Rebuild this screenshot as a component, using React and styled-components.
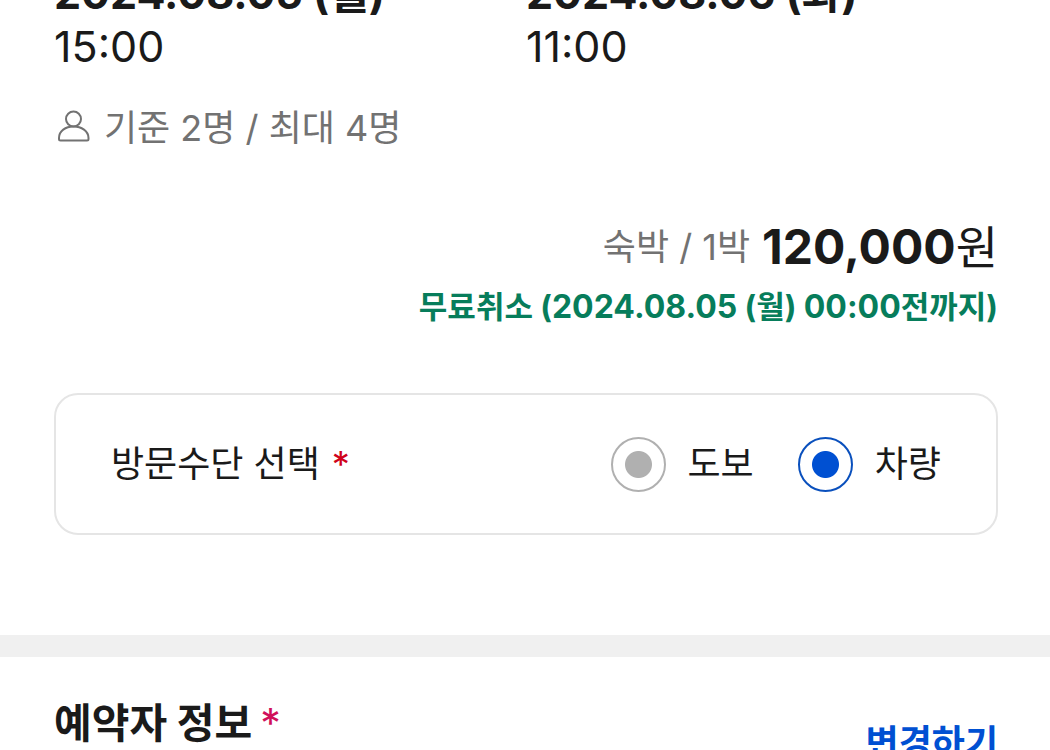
import React from "react";
import styled, { createGlobalStyle } from "styled-components";

const GlobalStyle = createGlobalStyle`
  *, *::before, *::after { box-sizing: border-box; }
  html, body { margin: 0; background: #fff; }
  body {
    font-family: Inter, "Noto Sans CJK KR", sans-serif;
    color: #1a1a1a;
    overflow: hidden;
  }
`;

const Page = styled.main`
  height: 100vh;
  overflow: hidden;
`;

const Section = styled.section`
  padding: 0 52px 0 54px;
`;

const Schedule = styled.div`
  display: grid;
  grid-template-columns: 1fr 1fr;
  margin-top: -33px;
`;

const Moment = styled.p`
  margin: 0;
  font-size: 43px;
  line-height: 53px;
  white-space: nowrap;
`;

const Day = styled.strong`
  display: block;
  font-weight: 700;
`;

const Guests = styled.p`
  display: flex;
  align-items: center;
  gap: 12px;
  margin: 31px 0 0;
  font-size: 36px;
  line-height: 48px;
  color: #727272;
`;

const GuestIcon = styled.svg`
  width: 38px;
  height: 38px;
  flex: none;
`;

const Price = styled.p`
  display: flex;
  justify-content: flex-end;
  align-items: center;
  margin: 63px 0 0;
  font-size: 36px;
  line-height: 64px;
  color: #727272;
`;

const Amount = styled.span`
  margin-left: 12px;
  font-size: 46px;
  color: #1a1a1a;

  strong {
    font-size: 48px;
    font-weight: 700;
  }
`;

const CancelNote = styled.p`
  margin: 4px 0 0;
  font-size: 31px;
  font-weight: 700;
  line-height: 48px;
  text-align: right;
  color: #077d5b;

  time {
    font-size: 32px;
  }
`;

const VisitCard = styled.fieldset`
  display: flex;
  align-items: center;
  justify-content: space-between;
  min-width: 0;
  margin: 62px 0 0;
  padding: 41px 55px;
  border: 2px solid #e5e5e5;
  border-radius: 24px;
`;

const FieldName = styled.span`
  font-size: 36px;
  line-height: 56px;
`;

const Required = styled.span`
  margin-left: ${(p) => p.$gap}px;
  font-weight: 400;
  color: ${(p) => p.$color};
`;

const Options = styled.div`
  display: flex;
  gap: 44px;
`;

const Option = styled.label`
  display: flex;
  align-items: center;
  gap: 22px;
  font-size: 36px;
  line-height: 56px;
`;

const Radio = styled.input`
  appearance: none;
  width: 55px;
  height: 55px;
  margin: 0;
  border: 2px solid #b0b0b0;
  border-radius: 50%;
  background: radial-gradient(circle, #b0b0b0 13px, transparent 14px);

  &:checked {
    border-color: #0a50bd;
    background: radial-gradient(circle, #0050d2 13px, transparent 14px);
  }
`;

const Divider = styled.hr`
  height: 22px;
  margin: 100px 0 0;
  border: 0;
  background: #f0f0f0;
`;

const GuestInfo = styled(Section)`
  display: flex;
  justify-content: space-between;
  align-items: flex-start;
`;

const Title = styled.h2`
  margin: 38px 0 0;
  font-size: 41px;
  font-weight: 700;
  line-height: 56px;
`;

const ChangeButton = styled.button`
  margin: 58px 0 0;
  padding: 0;
  border: 0;
  background: none;
  font: inherit;
  font-size: 36px;
  font-weight: 700;
  line-height: 56px;
  color: #0050d2;
`;

export default function App() {
  return (
    <>
      <GlobalStyle />
      <Page>
        <Section>
          <Schedule>
            <Moment>
              <Day>2024.08.05 (월)</Day>
              15:00
            </Moment>
            <Moment>
              <Day>2024.08.06 (화)</Day>
              11:00
            </Moment>
          </Schedule>
          <Guests>
            <GuestIcon viewBox="0 0 38 38" fill="none" stroke="#727272" strokeWidth="2" aria-hidden="true">
              <circle cx="19.5" cy="10" r="7.5" />
              <path d="M5 29C5 22 11.5 17.5 19.5 17.5S34.5 22 34.5 29V30Q34.5 31.5 33 31.5H6.5Q5 31.5 5 30Z" />
            </GuestIcon>
            기준 2명 / 최대 4명
          </Guests>
          <Price>
            숙박 / 1박
            <Amount>
              <strong>120,000</strong>원
            </Amount>
          </Price>
          <CancelNote>
            무료취소 (<time>2024.08.05</time> (월) <time>00:00</time>전까지)
          </CancelNote>
          <VisitCard aria-labelledby="visit-label">
            <FieldName id="visit-label">
              방문수단 선택
              <Required $gap={12} $color="#d0021b">*</Required>
            </FieldName>
            <Options>
              <Option>
                <Radio type="radio" name="visit" value="walk" />
                도보
              </Option>
              <Option>
                <Radio type="radio" name="visit" value="car" defaultChecked />
                차량
              </Option>
            </Options>
          </VisitCard>
        </Section>
        <Divider />
        <GuestInfo>
          <Title>
            예약자 정보
            <Required $gap={8} $color="#d0105a">*</Required>
          </Title>
          <ChangeButton type="button">변경하기</ChangeButton>
        </GuestInfo>
      </Page>
    </>
  );
}
